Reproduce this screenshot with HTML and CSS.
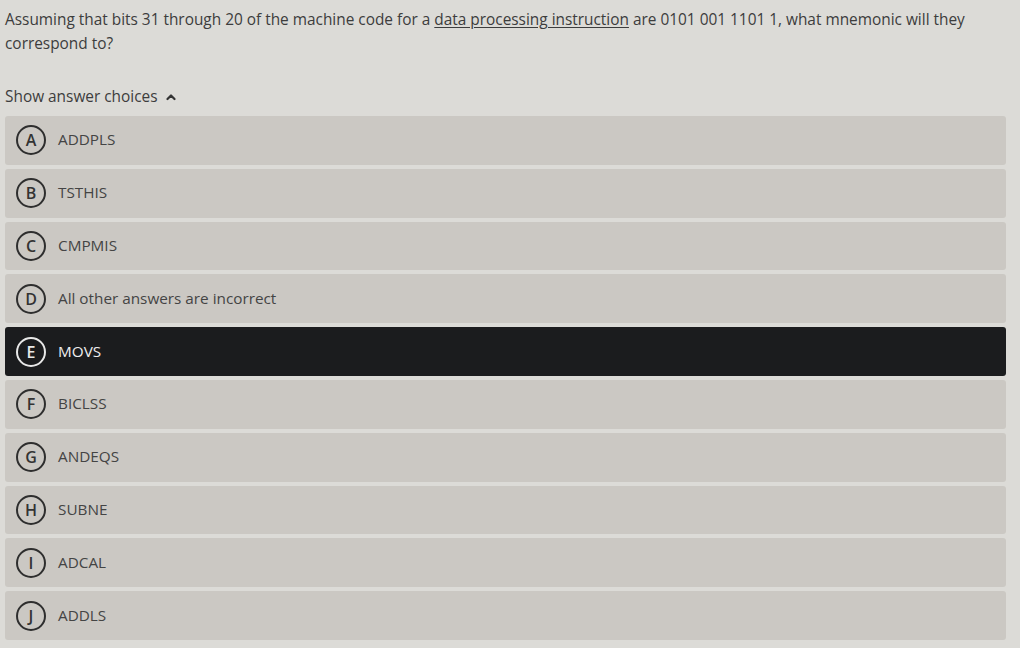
FILE: index.html
```html
<!DOCTYPE html>
<html>
<head>
<meta charset="utf-8">
<link rel="stylesheet" href="styles.css">
</head>
<body>
<div class="page">
  <p class="question">Assuming that bits 31 through 20 of the machine code for a <span class="term">data processing instruction</span> are 0101 001 1101 1, what mnemonic will they correspond to?</p>
  <div class="toggle">Show answer choices <svg class="chev" width="10" height="8" viewBox="0 0 10 8"><path d="M1.5 6 L5 2.5 L8.5 6" fill="none" stroke="#333" stroke-width="2.2" stroke-linecap="round" stroke-linejoin="round"/></svg></div>
  <div class="choices">
    <div class="choice"><span class="letter">A</span><span class="text">ADDPLS</span></div>
    <div class="choice"><span class="letter">B</span><span class="text">TSTHIS</span></div>
    <div class="choice"><span class="letter">C</span><span class="text">CMPMIS</span></div>
    <div class="choice"><span class="letter">D</span><span class="text">All other answers are incorrect</span></div>
    <div class="choice selected"><span class="letter">E</span><span class="text">MOVS</span></div>
    <div class="choice"><span class="letter">F</span><span class="text">BICLSS</span></div>
    <div class="choice"><span class="letter">G</span><span class="text">ANDEQS</span></div>
    <div class="choice"><span class="letter">H</span><span class="text">SUBNE</span></div>
    <div class="choice"><span class="letter">I</span><span class="text">ADCAL</span></div>
    <div class="choice"><span class="letter">J</span><span class="text">ADDLS</span></div>
  </div>
</div>
</body>
</html>
```
FILE: styles.css
```css
html, body {
  margin: 0;
  padding: 0;
  background: #dcdbd7;
}
body {
  font-family: "Open Sans", "DejaVu Sans", sans-serif;
  color: #3d3d3d;
}
.page {
  padding: 8px 14px 0 5px;
}
.question {
  margin: 0;
  font-size: 15.4px;
  line-height: 24px;
}
.term {
  text-decoration: underline;
  text-underline-offset: 2px;
}
.toggle {
  margin-top: 30px;
  font-size: 15.4px;
  line-height: 22px;
  display: flex;
  align-items: center;
  gap: 8px;
}
.chev {
  display: block;
}
.choices {
  margin-top: 8px;
  display: flex;
  flex-direction: column;
  gap: 4px;
}
.choice {
  height: 48.8px;
  background: #cbc8c3;
  border-radius: 3px;
  display: flex;
  align-items: center;
  padding-left: 11px;
  box-sizing: border-box;
}
.letter {
  width: 26px;
  height: 26px;
  border: 2px solid #2e2e2e;
  border-radius: 50%;
  display: flex;
  align-items: center;
  justify-content: center;
  font-size: 16px;
  font-weight: 600;
  color: #333;
  flex: none;
}
.text {
  margin-left: 12px;
  margin-bottom: 2px;
  font-size: 15.3px;
  color: #444;
}
.selected {
  background: #1b1c1e;
}
.selected .letter {
  border-color: #e8e8e8;
  color: #e8e8e8;
}
.selected .text {
  color: #eeeeee;
}
```
